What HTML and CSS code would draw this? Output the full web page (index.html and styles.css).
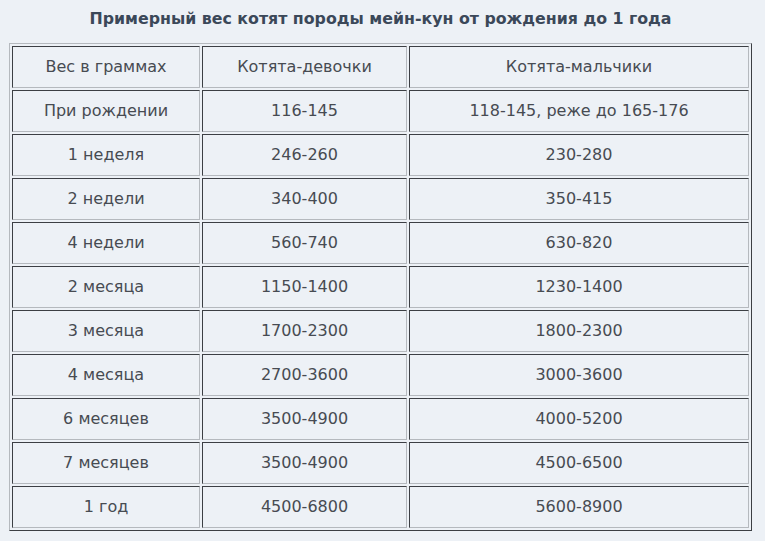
FILE: index.html
```html
<!DOCTYPE html>
<html lang="ru">
<head>
<meta charset="utf-8">
<title>Вес котят мейн-кун</title>
<link rel="stylesheet" href="styles.css">
</head>
<body>
<div class="page">
  <h1 class="title">Примерный вес котят породы мейн-кун от рождения до 1 года</h1>
  <table class="weights">
    <tr><td class="c1">Вес в граммах</td><td class="c2">Котята-девочки</td><td class="c3">Котята-мальчики</td></tr>
    <tr><td class="c1">При рождении</td><td class="c2">116-145</td><td class="c3">118-145, реже до 165-176</td></tr>
    <tr><td class="c1">1 неделя</td><td class="c2">246-260</td><td class="c3">230-280</td></tr>
    <tr><td class="c1">2 недели</td><td class="c2">340-400</td><td class="c3">350-415</td></tr>
    <tr><td class="c1">4 недели</td><td class="c2">560-740</td><td class="c3">630-820</td></tr>
    <tr><td class="c1">2 месяца</td><td class="c2">1150-1400</td><td class="c3">1230-1400</td></tr>
    <tr><td class="c1">3 месяца</td><td class="c2">1700-2300</td><td class="c3">1800-2300</td></tr>
    <tr><td class="c1">4 месяца</td><td class="c2">2700-3600</td><td class="c3">3000-3600</td></tr>
    <tr><td class="c1">6 месяцев</td><td class="c2">3500-4900</td><td class="c3">4000-5200</td></tr>
    <tr><td class="c1">7 месяцев</td><td class="c2">3500-4900</td><td class="c3">4500-6500</td></tr>
    <tr><td class="c1">1 год</td><td class="c2">4500-6800</td><td class="c3">5600-8900</td></tr>
  </table>
</div>
</body>
</html>
```
FILE: styles.css
```css
html, body {
  margin: 0;
  padding: 0;
  background: #edf1f6;
}
body {
  font-family: "DejaVu Sans", Verdana, sans-serif;
  color: #474b52;
}
.page {
  padding: 0 0 0 9px;
}
.title {
  margin: 0;
  width: 743px;
  height: 43px;
  box-sizing: border-box;
  padding-top: 8px;
  font-size: 15.8px;
  line-height: 22px;
  font-weight: bold;
  text-align: center;
  color: #3b4859;
}
.weights {
  border-collapse: separate;
  border-spacing: 2px;
  border: 1px solid;
  border-color: #b5b9be #3c3f44 #3c3f44 #b5b9be;
}
.weights td {
  box-sizing: border-box;
  padding: 0;
  line-height: 40px;
  font-size: 16px;
  text-align: center;
  border: 1px solid;
  border-color: #3c3f44 #b5b9be #b5b9be #3c3f44;
  white-space: nowrap;
}
.weights .c1 { width: 188px; }
.weights .c2 { width: 205px; }
.weights .c3 { width: 340px; }
```
